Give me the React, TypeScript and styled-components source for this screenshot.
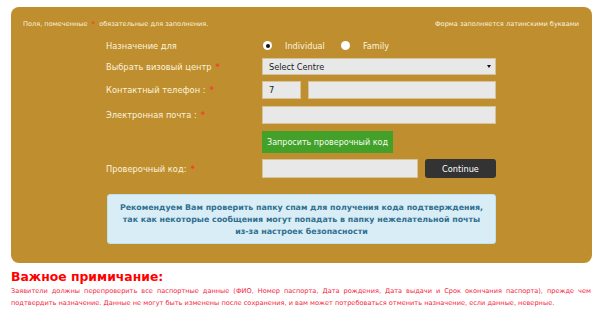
import React from 'react';
import styled, { createGlobalStyle } from 'styled-components';

const GlobalStyle = createGlobalStyle`
  body {
    margin: 0;
    background: #ffffff;
    font-family: 'DejaVu Sans', Verdana, sans-serif;
  }
`;

const Page = styled.div`
  width: 600px;
  height: 324px;
  overflow: hidden;
  padding-top: 7px;
  box-sizing: border-box;
`;

const Panel = styled.div`
  margin-left: 11px;
  width: 581px;
  height: 256px;
  box-sizing: border-box;
  background: #bf8e2e;
  border-radius: 8px;
  padding: 12px 13px 0 12px;
`;

const Header = styled.div`
  display: flex;
  justify-content: space-between;
  align-items: center;
  height: 10px;
  font-size: 6.6px;
  color: #fbf3df;
`;

const Star = styled.span`
  color: #f0442a;
  font-weight: bold;
  margin: 0 2px 0 4px;
`;

const Row = styled.div<{ $h: number; $mt: number }>`
  display: grid;
  grid-template-columns: 156px 234px;
  align-items: center;
  height: ${p => p.$h}px;
  margin-top: ${p => p.$mt}px;
  margin-left: 83px;
`;

const Label = styled.div`
  font-size: 8.3px;
  color: #fbf3df;
`;

const Field = styled.div`
  display: flex;
  align-items: center;
  gap: 7px;
  height: 100%;
`;

const Input = styled.div<{ $w?: number }>`
  box-sizing: border-box;
  height: 100%;
  width: ${p => (p.$w ? `${p.$w}px` : 'auto')};
  flex: ${p => (p.$w ? 'none' : '1')};
  background: #e8e8e8;
  border: 1px solid #d6c39a;
  font-size: 8.2px;
  color: #222;
  display: flex;
  align-items: center;
  padding-left: 6px;
`;

const Select = styled(Input)`
  justify-content: space-between;
  padding-right: 4px;
`;

const Caret = styled.span`
  width: 0;
  height: 0;
  border-left: 2px solid transparent;
  border-right: 2px solid transparent;
  border-top: 3px solid #111;
`;

const Radio = styled.span<{ $on?: boolean }>`
  width: 9px;
  height: 9px;
  border-radius: 50%;
  background: #ffffff;
  box-sizing: border-box;
  display: inline-flex;
  align-items: center;
  justify-content: center;
  &::after {
    content: '';
    width: 4px;
    height: 4px;
    border-radius: 50%;
    background: ${p => (p.$on ? '#111' : 'transparent')};
  }
`;

const RadioText = styled.span`
  font-size: 8.2px;
  color: #fbf3df;
  margin: 0 16px 0 13px;
`;

const RadioGroup = styled.div`
  display: flex;
  align-items: center;
  padding-left: 1px;
`;

const GreenButton = styled.div`
  height: 100%;
  width: 131px;
  box-sizing: border-box;
  background: #43a12a;
  color: #f4fff0;
  font-size: 8px;
  display: flex;
  align-items: center;
  justify-content: center;
`;

const DarkButton = styled.div`
  height: 100%;
  width: 71px;
  background: #333333;
  border-radius: 3px;
  color: #ffffff;
  font-size: 8.2px;
  display: flex;
  align-items: center;
  justify-content: center;
`;

const InfoBox = styled.div`
  margin: 16px 0 0 84px;
  width: 389px;
  height: 50px;
  box-sizing: border-box;
  background: #d9edf7;
  border: 1px solid #bce3ee;
  border-radius: 3px;
  color: #31708f;
  font-weight: bold;
  font-size: 7.9px;
  line-height: 12px;
  text-align: center;
  padding-top: 7px;
`;

const Note = styled.div`
  padding: 5px 9px 0 11px;
`;

const NoteTitle = styled.div`
  color: #ff0000;
  font-weight: bold;
  font-size: 12.4px;
  line-height: 17px;
`;

const NoteText = styled.div`
  color: #f51d3c;
  font-size: 6.6px;
  line-height: 12px;
  text-align: justify;
`;

export default function App() {
  return (
    <Page>
      <GlobalStyle />
      <Panel>
        <Header>
          <span>
            Поля, помеченные<Star>*</Star> обязательные для заполнения.
          </span>
          <span>Форма заполняется латинскими буквами</span>
        </Header>

        <Row $h={15} $mt={9}>
          <Label>Назначение для</Label>
          <RadioGroup>
            <Radio $on />
            <RadioText>Individual</RadioText>
            <Radio />
            <RadioText>Family</RadioText>
          </RadioGroup>
        </Row>

        <Row $h={17} $mt={5}>
          <Label>
            Выбрать визовый центр<Star>*</Star>
          </Label>
          <Select>
            <span>Select Centre</span>
            <Caret />
          </Select>
        </Row>

        <Row $h={18} $mt={6}>
          <Label>
            Контактный телефон :<Star>*</Star>
          </Label>
          <Field>
            <Input $w={39}>7</Input>
            <Input />
          </Field>
        </Row>

        <Row $h={18} $mt={7}>
          <Label>
            Электронная почта :<Star>*</Star>
          </Label>
          <Input />
        </Row>

        <Row $h={22} $mt={7}>
          <span />
          <GreenButton>Запросить проверочный код</GreenButton>
        </Row>

        <Row $h={19} $mt={6}>
          <Label>
            Проверочный код:<Star>*</Star>
          </Label>
          <Field>
            <Input />
            <DarkButton>Continue</DarkButton>
          </Field>
        </Row>

        <InfoBox>
          Рекомендуем Вам проверить папку спам для получения кода подтверждения,
          <br />
          так как некоторые сообщения могут попадать в папку нежелательной почты
          <br />
          из-за настроек безопасности
        </InfoBox>
      </Panel>

      <Note>
        <NoteTitle>Важное примичание:</NoteTitle>
        <NoteText>
          Заявители должны перепроверить все паспортные данные (ФИО, Номер паспорта, Дата рождения, Дата
          выдачи и Срок окончания паспорта), прежде чем подтвердить назначение. Данные не могут быть
          изменены после сохранения, и вам может потребоваться отменить назначение, если данные, неверные.
        </NoteText>
      </Note>
    </Page>
  );
}
